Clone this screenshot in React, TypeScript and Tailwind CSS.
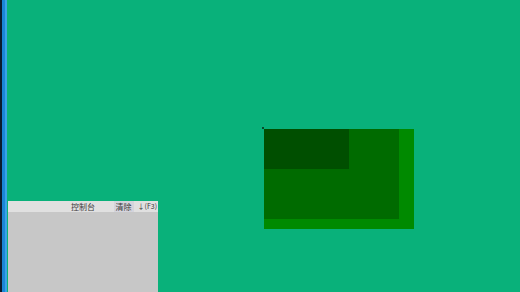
export default function App(){
  return (
    <div className="relative flex h-[292px] w-[520px] overflow-hidden bg-[#09b17a]" style={{fontFamily:'"Noto Sans CJK SC","Liberation Sans",sans-serif'}}>
      {/* left edge strip */}
      <div className="flex h-full w-[7px] shrink-0">
        <div className="w-[2px] bg-[#0b1b2c]" />
        <div className="w-[3px] bg-[#1a86d6]" />
        <div className="w-[2px] bg-[#3aa3e8]" />
      </div>

      {/* canvas */}
      <div className="relative flex-1">
        <div className="absolute left-[257px] top-[129px] h-[100px] w-[150px] bg-[#008a00]">
          <div className="h-[90px] w-[135px] bg-[#006b00]">
            <div className="h-[40px] w-[85px] bg-[#004f00]" />
          </div>
        </div>
        <div className="absolute left-[255px] top-[127px] h-[2px] w-[2px] bg-[#0a4a2a]" />

        {/* console */}
        <div className="absolute left-[1px] top-[201px] flex h-[91px] w-[150px] flex-col bg-[#c7c7c7]">
          <div className="relative flex h-[11px] items-center justify-center bg-[#e0e0e0] text-[8px] leading-none text-[#3a3a3a]">
            <span>控制台</span>
            <div className="absolute right-[1px] top-0 flex h-full items-center gap-[4px]">
              <span className="flex h-full items-center bg-[#d4d4dc] px-[2px]">清除</span>
              <span className="text-[7px]">↓(F3)</span>
            </div>
          </div>
        </div>
      </div>
    </div>
  )
}
